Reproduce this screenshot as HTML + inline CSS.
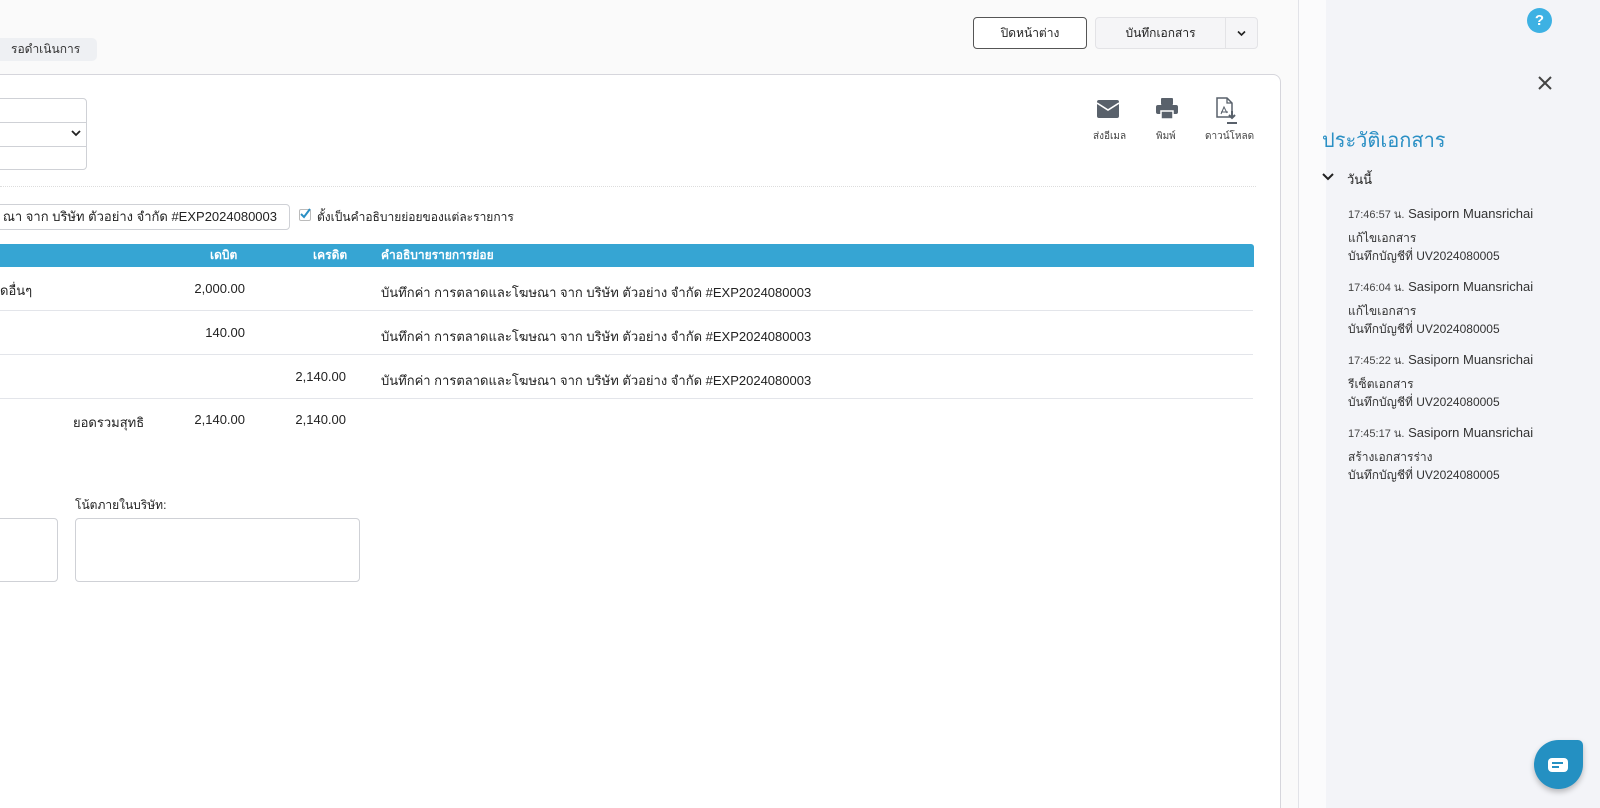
<!DOCTYPE html>
<html style="overflow:hidden;width:1600px;height:808px"><head><meta charset="utf-8"><style>
*{box-sizing:border-box;margin:0;padding:0}
body{width:1600px;height:808px;overflow:hidden;background:#fafafa;font-family:"Liberation Sans","Noto Sans CJK SC",sans-serif;color:#222;position:relative;font-size:13px}
.a{position:absolute;white-space:nowrap}
.card{position:absolute;left:-20px;top:74px;width:1301px;height:734px;background:#fff;border:1px solid #d6d6dc;border-bottom:none;border-radius:8px 8px 0 0}
.row{position:absolute;left:0;width:1253px;height:44px;border-bottom:1px solid #e3e5ea}
.num{position:absolute;text-align:right}
.side{position:absolute;left:1298px;top:0;width:302px;height:808px;background:#f3f4f8;border-left:1px solid #e2e3e8}
.ent .t{font-size:11px;color:#444}
.ent .n{font-size:13px;color:#333}
.ent div{font-size:12px;color:#333;line-height:18px}
</style></head><body>
<div class="a" style="left:0;top:38px;width:97px;height:23px;background:#eef0f3;border-radius:0 5px 5px 0;font-size:12px;line-height:23px;padding-left:11px;color:#333">รอดำเนินการ</div>
<div class="a" style="left:973px;top:17px;width:114px;height:32px;border:1px solid #555;border-radius:4px;background:#fff;text-align:center;line-height:30px;font-size:12px">ปิดหน้าต่าง</div>
<div class="a" style="left:1095px;top:17px;width:163px;height:32px;border:1px solid #e3e3e6;border-radius:4px;background:#f5f5f7;font-size:12px;line-height:30px">
<span style="position:absolute;left:0;width:129px;text-align:center">บันทึกเอกสาร</span>
<span style="position:absolute;left:129px;top:0;height:30px;border-left:1px solid #e3e3e6;width:33px"></span>
<svg style="position:absolute;left:141px;top:12px" width="9" height="7" viewBox="0 0 9 7"><path d="M1 1.5l3.5 3.5 3.5-3.5" stroke="#222" stroke-width="1.6" fill="none"/></svg></div>

<div class="card"></div>
<div class="a" style="left:-10px;top:98px;width:97px;height:72px;border:1px solid #cfd1d6;border-radius:4px;background:#fff"></div>
<div class="a" style="left:0;top:122px;width:86px;height:1px;background:#cfd1d6"></div>
<div class="a" style="left:0;top:146px;width:86px;height:1px;background:#cfd1d6"></div>
<svg class="a" style="left:71px;top:129px" width="10" height="8" viewBox="0 0 10 8"><path d="M1 2l4 4 4-4" stroke="#222" stroke-width="1.8" fill="none"/></svg>
<div class="a" style="left:0;top:186px;width:1256px;border-top:1px dotted #ddd"></div>

<svg class="a" style="left:1097px;top:100px" width="22" height="18" viewBox="0 0 22 18"><rect x="0" y="0" width="22" height="18" rx="2" fill="#59616b"/><path d="M0 3l11 7 11-7" stroke="#fff" stroke-width="1.6" fill="none"/></svg>
<svg class="a" style="left:1156px;top:98px" width="22" height="22" viewBox="0 0 22 22"><rect x="5" y="0" width="12" height="7" rx="1" fill="#59616b"/><rect x="0" y="7" width="22" height="9" rx="2" fill="#59616b"/><rect x="5" y="13" width="12" height="8" fill="#59616b" stroke="#fff" stroke-width="1.5"/></svg>
<svg class="a" style="left:1215px;top:97px" width="24" height="28" viewBox="0 0 24 28"><path d="M2 1h10l5 5v14H2z" fill="none" stroke="#59616b" stroke-width="1.5"/><path d="M12 1v5h5" fill="none" stroke="#59616b" stroke-width="1.3"/><path d="M6 17l3-7 3 6M6 15h7" stroke="#59616b" stroke-width="1" fill="none"/><path d="M17 14v7M14 18l3 3 3-3" stroke="#59616b" stroke-width="2" fill="none"/><rect x="12" y="25" width="10" height="2" fill="#59616b"/></svg>
<div class="a" style="left:1093px;top:129px;font-size:10px;color:#444">ส่งอีเมล</div>
<div class="a" style="left:1156px;top:129px;font-size:10px;color:#444">พิมพ์</div>
<div class="a" style="left:1205px;top:129px;font-size:10px;color:#444">ดาวน์โหลด</div>

<div class="a" style="left:-10px;top:204px;width:300px;height:26px;border:1px solid #cfd1d6;border-radius:4px;background:#fff;font-size:13px;line-height:24px;padding-left:10px;direction:rtl;overflow:hidden"><span style="direction:ltr;unicode-bidi:embed;padding-right:12px">ณา จาก บริษัท ตัวอย่าง จำกัด #EXP2024080003</span></div>
<div class="a" style="left:299px;top:209px;width:12px;height:12px;border:1px solid #bbb;border-radius:2px;background:#fff"></div>
<svg class="a" style="left:299px;top:207px" width="13" height="13" viewBox="0 0 13 13"><path d="M2 7l3 3 6-8" stroke="#2a8fc4" stroke-width="2" fill="none"/></svg>
<div class="a" style="left:317px;top:208px;font-size:12px">ตั้งเป็นคำอธิบายย่อยของแต่ละรายการ</div>

<div class="a" style="left:0;top:244px;width:1254px;height:23px;background:#36a5d3;border-radius:0 3px 0 0;color:#fff;font-weight:bold;font-size:12px;line-height:23px">
<span class="a" style="left:210px">เดบิต</span><span class="a" style="left:313px">เครดิต</span><span class="a" style="left:381px">คำอธิบายรายการย่อย</span></div>
<div class="row" style="top:267px"></div><div class="row" style="top:311px"></div><div class="row" style="top:355px"></div>
<div class="a" style="left:0;top:280px">ดอื่นๆ</div>
<div class="num a" style="right:1355px;top:281px">2,000.00</div>
<div class="num a" style="right:1355px;top:325px">140.00</div>
<div class="num a" style="right:1254px;top:369px">2,140.00</div>
<div class="a" style="left:381px;top:282px">บันทึกค่า การตลาดและโฆษณา จาก บริษัท ตัวอย่าง จำกัด #EXP2024080003</div>
<div class="a" style="left:381px;top:326px">บันทึกค่า การตลาดและโฆษณา จาก บริษัท ตัวอย่าง จำกัด #EXP2024080003</div>
<div class="a" style="left:381px;top:370px">บันทึกค่า การตลาดและโฆษณา จาก บริษัท ตัวอย่าง จำกัด #EXP2024080003</div>
<div class="a" style="left:73px;top:412px">ยอดรวมสุทธิ</div>
<div class="num a" style="right:1355px;top:412px">2,140.00</div>
<div class="num a" style="right:1254px;top:412px">2,140.00</div>

<div class="a" style="left:75px;top:496px;font-size:12px">โน้ตภายในบริษัท:</div>
<div class="a" style="left:-10px;top:518px;width:68px;height:64px;border:1px solid #cfd1d6;border-radius:4px;background:#fff"></div>
<div class="a" style="left:75px;top:518px;width:285px;height:64px;border:1px solid #cfd1d6;border-radius:4px;background:#fff"></div>

<div class="side"><div style="position:absolute;left:0;top:0;width:27px;height:808px;background:#fbfbfc"></div></div>
<div class="a" style="left:1527px;top:8px;width:25px;height:25px;border-radius:50%;background:#3db1e3;color:#fff;font-weight:bold;text-align:center;line-height:25px;font-size:15px">?</div>
<svg class="a" style="left:1538px;top:76px" width="14" height="14" viewBox="0 0 14 14"><path d="M1 1l12 12M13 1L1 13" stroke="#444" stroke-width="2"/></svg>
<div class="a" style="left:1322px;top:124px;font-size:20px;color:#2a8fc4">ประวัติเอกสาร</div>
<svg class="a" style="left:1322px;top:172px" width="12" height="9" viewBox="0 0 12 9"><path d="M1 2l5 5 5-5" stroke="#222" stroke-width="2" fill="none"/></svg>
<div class="a" style="left:1347px;top:169px;font-size:13px">วันนี้</div>
<div class="a ent" style="left:1348px;top:205px"><span class="t">17:46:57 น.</span> <span class="n">Sasiporn Muansrichai</span><div style="margin-top:6px">แก้ไขเอกสาร</div><div>บันทึกบัญชีที่ UV2024080005</div></div>
<div class="a ent" style="left:1348px;top:278px"><span class="t">17:46:04 น.</span> <span class="n">Sasiporn Muansrichai</span><div style="margin-top:6px">แก้ไขเอกสาร</div><div>บันทึกบัญชีที่ UV2024080005</div></div>
<div class="a ent" style="left:1348px;top:351px"><span class="t">17:45:22 น.</span> <span class="n">Sasiporn Muansrichai</span><div style="margin-top:6px">รีเซ็ตเอกสาร</div><div>บันทึกบัญชีที่ UV2024080005</div></div>
<div class="a ent" style="left:1348px;top:424px"><span class="t">17:45:17 น.</span> <span class="n">Sasiporn Muansrichai</span><div style="margin-top:6px">สร้างเอกสารร่าง</div><div>บันทึกบัญชีที่ UV2024080005</div></div>

<div class="a" style="left:1534px;top:740px;width:49px;height:49px;background:#2490c2;border-radius:50% 5px 50% 50%;box-shadow:0 3px 6px rgba(0,0,0,.25)"></div>
<svg class="a" style="left:1548px;top:758px" width="20" height="14" viewBox="0 0 20 14"><rect x="0" y="0" width="20" height="14" rx="4" fill="#fff"/><rect x="4" y="4" width="11" height="2" fill="#2490c2"/><rect x="4" y="8" width="7" height="2" fill="#2490c2"/></svg>
</body></html>
